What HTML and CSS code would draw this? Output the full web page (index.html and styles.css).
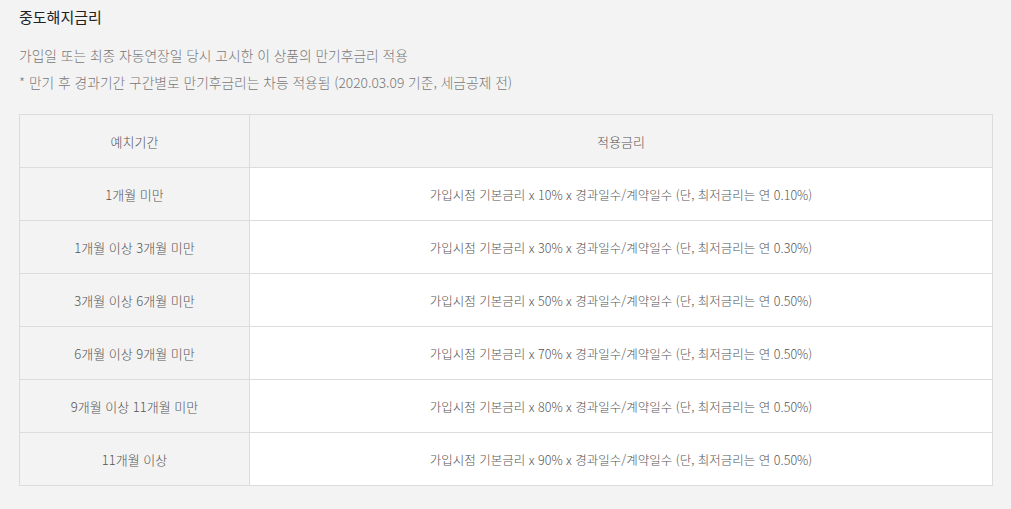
FILE: index.html
```html
<!DOCTYPE html>
<html lang="ko">
<head>
<meta charset="utf-8">
<link rel="stylesheet" href="styles.css">
</head>
<body>
<div class="page">
  <h2 class="title">중도해지금리</h2>
  <p class="desc">가입일 또는 최종 자동연장일 당시 고시한 이 상품의 만기후금리 적용</p>
  <p class="desc">* 만기 후 경과기간 구간별로 만기후금리는 차등 적용됨 (2020.03.09 기준, 세금공제 전)</p>
  <table class="rates">
    <thead>
      <tr><th class="period">예치기간</th><th class="rate">적용금리</th></tr>
    </thead>
    <tbody>
      <tr><th class="period">1개월 미만</th><td class="rate">가입시점 기본금리 x 10% x 경과일수/계약일수 (단, 최저금리는 연 0.10%)</td></tr>
      <tr><th class="period">1개월 이상 3개월 미만</th><td class="rate">가입시점 기본금리 x 30% x 경과일수/계약일수 (단, 최저금리는 연 0.30%)</td></tr>
      <tr><th class="period">3개월 이상 6개월 미만</th><td class="rate">가입시점 기본금리 x 50% x 경과일수/계약일수 (단, 최저금리는 연 0.50%)</td></tr>
      <tr><th class="period">6개월 이상 9개월 미만</th><td class="rate">가입시점 기본금리 x 70% x 경과일수/계약일수 (단, 최저금리는 연 0.50%)</td></tr>
      <tr><th class="period">9개월 이상 11개월 미만</th><td class="rate">가입시점 기본금리 x 80% x 경과일수/계약일수 (단, 최저금리는 연 0.50%)</td></tr>
      <tr><th class="period">11개월 이상</th><td class="rate">가입시점 기본금리 x 90% x 경과일수/계약일수 (단, 최저금리는 연 0.50%)</td></tr>
    </tbody>
  </table>
</div>
</body>
</html>
```
FILE: styles.css
```css
html, body {
  margin: 0;
  padding: 0;
  background: #f3f3f3;
}
body {
  font-family: "Noto Sans CJK KR", "Noto Sans", sans-serif;
  font-weight: 300;
  color: #555;
}
.page {
  padding: 7px 19px 0 19px;
}
.title {
  margin: 0;
  font-size: 15px;
  font-weight: 400;
  color: #222;
  line-height: 20px;
}
.desc {
  margin: 0;
  font-size: 13.75px;
  color: #777;
  line-height: 27px;
}
.title + .desc {
  margin-top: 15px;
}
.rates {
  margin-top: 18px;
  width: 974px;
  border-collapse: collapse;
  table-layout: fixed;
  color: #555;
}
.rates th, .rates td {
  height: 52px;
  padding: 0;
  border: 1px solid #dcdcdc;
  text-align: center;
  font-weight: 300;
  vertical-align: middle;
}
.rates .period {
  width: 229px;
  font-size: 13px;
  background: #f3f3f3;
}
.rates .rate {
  font-size: 12.5px;
}
.rates thead .rate {
  font-size: 13px;
  background: #f3f3f3;
}
.rates tbody .rate {
  background: #fff;
}
```
